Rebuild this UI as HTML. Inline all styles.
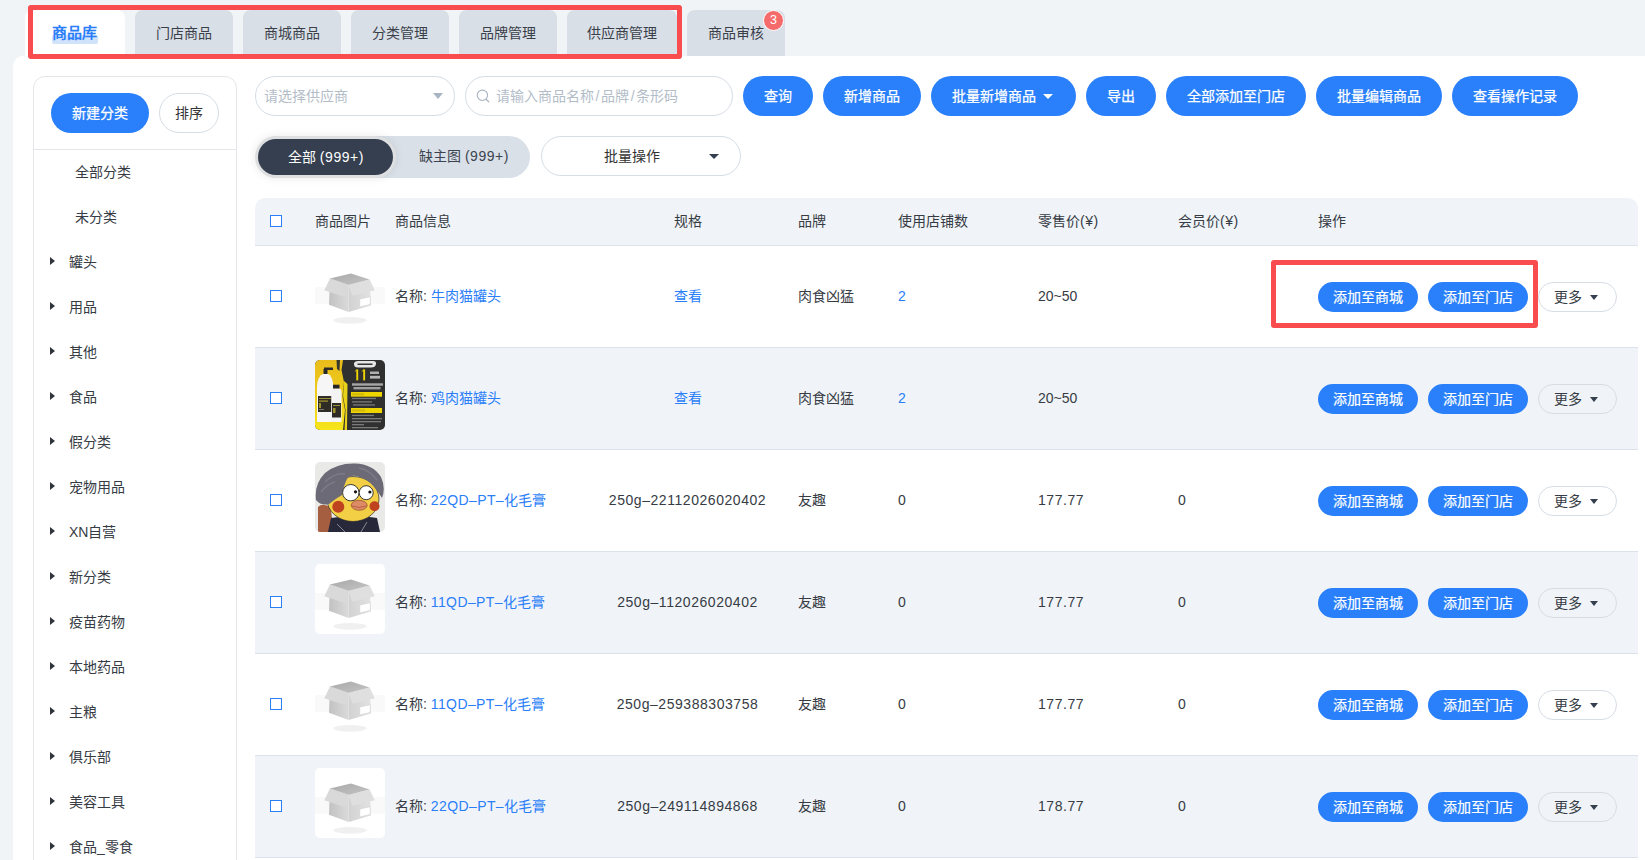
<!DOCTYPE html>
<html lang="zh-CN">
<head>
<meta charset="utf-8">
<style>
*{box-sizing:border-box;margin:0;padding:0}
html,body{width:1645px;height:860px;overflow:hidden}
body{background:#f0f4f7;font-family:"Liberation Sans",sans-serif;font-size:14px;color:#363b44;position:relative}
.abs{position:absolute}
.n{letter-spacing:0.55px}
.tab{position:absolute;top:10px;height:46px;background:#d9dfe6;border-radius:8px 8px 0 0;color:#39404a;line-height:46px;text-align:center;font-size:14px}
.redbox{position:absolute;border:5px solid #f84c4e;border-radius:3px}
.panel{position:absolute;left:13px;top:56px;width:1700px;height:900px;background:#fff;border-radius:10px 0 0 0}
.side{position:absolute;left:33px;top:76px;width:204px;height:900px;border:1px solid #e4e6e9;border-radius:12px}
.btn{position:absolute;height:40px;line-height:40px;border-radius:20px;background:#2a80fa;color:#fff;text-align:center;font-size:14px;-webkit-text-stroke:0.25px #fff}
.obtn{position:absolute;height:40px;line-height:38px;border-radius:20px;background:#fff;border:1px solid #d6dde5;color:#333;text-align:center}
.item{position:absolute;left:69px;font-size:14px;color:#363b44;line-height:20px}
.tri{position:absolute;left:50px;width:0;height:0;border-top:4px solid transparent;border-bottom:4px solid transparent;border-left:5.5px solid #30343b}
.sel{position:absolute;height:40px;border:1px solid #d5dde5;border-radius:20px;background:#fff}
.dtri{position:absolute;width:0;height:0;border-left:5px solid transparent;border-right:5px solid transparent;border-top:6px solid #a9b5c2}
.th{position:absolute;top:211px;line-height:20px;color:#363b44}
.row{position:absolute;left:255px;width:1383px;height:102px;border-bottom:1px solid #dce2e9}
.cb{position:absolute;left:270px;width:12px;height:12px;border:1.4px solid #2a7ef8;background:#fff}
.cell{position:absolute;line-height:20px;color:#363b44}
.link{color:#2a7ef8}
.sbtn{position:absolute;height:30px;line-height:30px;border-radius:15px;background:#2a80fa;color:#fff;text-align:center;width:100px;-webkit-text-stroke:0.2px #fff}
.more{position:absolute;left:1538px;width:79px;height:30px;line-height:28px;border-radius:15px;border:1px solid #d6dde5;color:#363b44;padding-left:15.3px}
.more i{position:absolute;left:50.5px;top:12px;width:0;height:0;border-left:4.5px solid transparent;border-right:4.5px solid transparent;border-top:5px solid #343f4f}
.img{position:absolute;left:315px;width:70px;height:70px;border-radius:5px;overflow:hidden}
.sl{display:inline-block;margin:0 1.6px}
</style>
</head>
<body>
<div class="tab" style="left:25px;width:100px;background:#fff"></div>
<div class="abs" style="left:52px;top:35px;width:46px;height:9px;background:#d1e3fb;border-radius:2px"></div>
<div class="abs" style="left:52px;top:23px;line-height:20px;font-size:15px;font-weight:bold;color:#2a7ef8">商品库</div>
<div class="tab" style="left:135px;width:98px">门店商品</div>
<div class="tab" style="left:243px;width:98px">商城商品</div>
<div class="tab" style="left:351px;width:98px">分类管理</div>
<div class="tab" style="left:459px;width:98px">品牌管理</div>
<div class="tab" style="left:567px;width:110px">供应商管理</div>
<div class="tab" style="left:687px;width:98px">商品审核</div>
<div class="abs" style="left:763px;top:10px;width:21px;height:21px;border-radius:50%;background:#f56b6b;border:1.2px solid #fff;color:#fff;font-size:12.5px;line-height:18.6px;text-align:center">3</div>
<div class="panel"></div>
<div class="redbox" style="left:27.5px;top:4.6px;width:654.5px;height:54.9px"></div>
<div class="side"></div>
<div class="btn" style="left:51px;top:93px;width:98px">新建分类</div>
<div class="obtn" style="left:159px;top:93px;width:60px">排序</div>
<div class="abs" style="left:34px;top:149px;width:202px;height:1px;background:#e4e6e9"></div>
<div class="item" style="left:75px;top:162px">全部分类</div>
<div class="item" style="left:75px;top:207px">未分类</div>
<div class="tri" style="top:257px"></div><div class="item" style="top:252px">罐头</div>
<div class="tri" style="top:302px"></div><div class="item" style="top:297px">用品</div>
<div class="tri" style="top:347px"></div><div class="item" style="top:342px">其他</div>
<div class="tri" style="top:392px"></div><div class="item" style="top:387px">食品</div>
<div class="tri" style="top:437px"></div><div class="item" style="top:432px">假分类</div>
<div class="tri" style="top:482px"></div><div class="item" style="top:477px">宠物用品</div>
<div class="tri" style="top:527px"></div><div class="item" style="top:522px">XN自营</div>
<div class="tri" style="top:572px"></div><div class="item" style="top:567px">新分类</div>
<div class="tri" style="top:617px"></div><div class="item" style="top:612px">疫苗药物</div>
<div class="tri" style="top:662px"></div><div class="item" style="top:657px">本地药品</div>
<div class="tri" style="top:707px"></div><div class="item" style="top:702px">主粮</div>
<div class="tri" style="top:752px"></div><div class="item" style="top:747px">俱乐部</div>
<div class="tri" style="top:797px"></div><div class="item" style="top:792px">美容工具</div>
<div class="tri" style="top:842px"></div><div class="item" style="top:837px">食品_零食</div>
<div class="sel" style="left:255px;top:76px;width:200px"><span class="abs" style="left:8px;top:9px;line-height:20px;color:#b3bdc8">请选择供应商</span><i class="dtri" style="left:177px;top:16px"></i></div>
<div class="sel" style="left:465px;top:76px;width:268px"><svg class="abs" style="left:9px;top:11px" width="16" height="16" viewBox="0 0 16 16"><circle cx="7.4" cy="7.3" r="5.2" fill="none" stroke="#a9b4c0" stroke-width="1.1"/><line x1="11.1" y1="11.3" x2="13.7" y2="13.8" stroke="#a9b4c0" stroke-width="1.2" stroke-linecap="round"/></svg><span class="abs" style="left:30px;top:9px;line-height:20px;color:#b3bdc8;white-space:nowrap">请输入商品名称<span class="sl">/</span>品牌<span class="sl">/</span>条形码</span></div>
<div class="btn" style="left:743px;top:76px;width:70px">查询</div>
<div class="btn" style="left:823px;top:76px;width:98px">新增商品</div>
<div class="btn" style="left:931px;top:76px;width:145px;text-align:left;padding-left:21px">批量新增商品<i class="abs" style="left:112px;top:18px;width:0;height:0;border-left:5px solid transparent;border-right:5px solid transparent;border-top:5.5px solid #fff"></i></div>
<div class="btn" style="left:1086px;top:76px;width:70px">导出</div>
<div class="btn" style="left:1166px;top:76px;width:140px">全部添加至门店</div>
<div class="btn" style="left:1316px;top:76px;width:126px">批量编辑商品</div>
<div class="btn" style="left:1452px;top:76px;width:126px">查看操作记录</div>
<div class="abs" style="left:256px;top:136px;width:274px;height:42px;border-radius:21px;background:#d9e0e7"></div>
<div class="abs" style="left:255px;top:136px;width:141px;height:42px;border-radius:21px;background:#dedfe1;box-shadow:0 0 10px rgba(0,0,0,.09)"></div>
<div class="abs" style="left:258px;top:139px;width:135px;height:36px;border-radius:18px;background:#353f4f;color:#fff;line-height:36px;text-align:center;padding-left:1px">全部 <span class="n">(999+)</span></div>
<div class="abs" style="left:419px;top:146px;line-height:20px;color:#3b4350;white-space:nowrap">缺主图 <span class="n">(999+)</span></div>
<div class="sel" style="left:541px;top:136px;width:200px"><span class="abs" style="left:62px;top:9px;line-height:20px;color:#333">批量操作</span><i class="dtri" style="left:167px;top:17px;border-top:5px solid #343f4f"></i></div>
<svg width="0" height="0" style="position:absolute">
<defs>
<linearGradient id="gi" x1="0" y1="0" x2="1" y2="1"><stop offset="0" stop-color="#a9a9a9"/><stop offset="1" stop-color="#c4c4c4"/></linearGradient>
<linearGradient id="gl" x1="0" y1="0" x2="1" y2="0"><stop offset="0" stop-color="#c2c2c2"/><stop offset="1" stop-color="#dadada"/></linearGradient>
<linearGradient id="gr" x1="0" y1="0" x2="1" y2="0"><stop offset="0" stop-color="#d2d2d2"/><stop offset="1" stop-color="#e2e2e2"/></linearGradient>
<symbol id="box" viewBox="0 0 750 750">
<rect x="0" y="310" width="750" height="180" fill="#f9f9f9"/>
<ellipse cx="375" cy="668" rx="178" ry="36" fill="#f0f0f0"/>
<polygon points="160,220 360,290 360,578 150,500" fill="url(#gl)"/>
<polygon points="360,290 585,230 600,510 360,578" fill="url(#gr)"/>
<polygon points="480,440 592,414 592,498 480,524" fill="#fff" stroke="#cfcfcf" stroke-width="6"/>
<polygon points="160,220 385,167 585,230 360,290" fill="url(#gi)"/>
<polygon points="160,220 100,345 325,420 360,290" fill="#d9d9d9"/>
<polygon points="585,230 640,345 400,405 360,290" fill="#dfdfdf"/>
</symbol>
</defs>
</svg>
<div class="abs" style="left:255px;top:198px;width:1383px;height:48px;background:#f0f4f8;border-radius:10px 10px 0 0;border-bottom:1px solid #dde3ea"></div>
<div class="cb" style="top:215px"></div>
<div class="th" style="left:315px">商品图片</div>
<div class="th" style="left:395px">商品信息</div>
<div class="th" style="left:674px">规格</div>
<div class="th" style="left:798px">品牌</div>
<div class="th" style="left:898px">使用店铺数</div>
<div class="th" style="left:1038px">零售价<span class="n">(¥)</span></div>
<div class="th" style="left:1178px">会员价<span class="n">(¥)</span></div>
<div class="th" style="left:1318px">操作</div>
<div class="row" style="top:246px;background:#fff"></div>
<div class="cb" style="top:290px"></div>
<svg class="img" style="top:258px" viewBox="0 0 750 750"><use href="#box"/></svg>
<div class="cell" style="left:395px;top:286px">名称: <span class="link">牛肉猫罐头</span></div>
<div class="cell link" style="left:597px;width:181px;text-align:center;top:286px">查看</div>
<div class="cell" style="left:798px;top:286px">肉食凶猛</div>
<div class="cell link" style="left:898px;top:286px">2</div>
<div class="cell" style="left:1038px;top:286px">20~50</div>
<div class="sbtn" style="left:1318px;top:282px">添加至商城</div>
<div class="sbtn" style="left:1428px;top:282px">添加至门店</div>
<div class="more" style="top:282px">更多<i></i></div>
<div class="row" style="top:348px;background:#f0f4f8"></div>
<div class="cb" style="top:392px"></div>
<div class="img" style="top:360px"><svg width="70" height="70" viewBox="0 0 70 70">
<defs><linearGradient id="ys" x1="0" y1="0" x2="0" y2="1"><stop offset="0" stop-color="#e9bd1c"/><stop offset=".6" stop-color="#efcf1a"/><stop offset="1" stop-color="#f7e61a"/></linearGradient></defs>
<rect width="70" height="70" fill="#303030"/>
<path d="M0 0 H28 L26.5 10 L29 22 L27.5 36 L30 50 L28 70 H0Z" fill="url(#ys)"/>
<path d="M29 21 L32.5 24 L32 70 L29.5 70 L30.5 50 L28 36Z" fill="#e8d21a"/>
<path d="M21.5 0 L25 0 L24.5 11 L22 9Z" fill="#3a3a30"/>
<path d="M2 62 L2 27 Q2 16 9 13.5 L12.5 13.5 Q18 16 18.4 27 L18.4 61 Q18.4 62 17 62 L3 62Z" fill="#f6f6f6"/>
<rect x="8.5" y="9" width="4" height="5" fill="#2a2a2a"/><rect x="9" y="7.5" width="9" height="2.5" fill="#2a2a2a"/>
<rect x="3" y="36" width="14" height="16" fill="#2e2c24"/>
<rect x="4" y="38" width="12" height="1" fill="#b8a640" opacity=".8"/><rect x="4" y="40.5" width="9" height="1.2" fill="#c8b530" opacity=".8"/><rect x="4" y="43" width="2" height="5" fill="#d0c030" opacity=".7"/><rect x="4" y="49" width="5" height="1" fill="#aaa" opacity=".6"/>
<path d="M16.2 62 L16.2 33 Q16.2 29 19 28.2 L24 28.2 Q26.6 29 26.6 33 L26.6 61 Q26.6 62 25.6 62 L17 62Z" fill="#f3f3f3"/>
<rect x="18" y="24.7" width="6.5" height="3.8" fill="#262626"/>
<rect x="17" y="43" width="9" height="14.5" fill="#2e2c24"/>
<rect x="18" y="45" width="7" height="1" fill="#b8a640" opacity=".8"/><rect x="18" y="48" width="2.5" height="5" fill="#d0c030" opacity=".7"/>
<path d="M39 3 Q40 0.8 44 1 L58 1 Q61.5 1 61 4 Q60.5 7.5 56 7.5 L43 7.5 Q38.5 7.5 39 3Z" fill="#e6e6e6"/>
<path d="M42.5 4.2 H57.5" stroke="#333" stroke-width="1.4"/>
<rect x="41.3" y="9.6" width="1.9" height="10.8" fill="#f0d200"/><path d="M39.5 12 L41.3 9.6 L43 9.8 Z" fill="#f0d200"/>
<rect x="48.2" y="9.6" width="1.9" height="10.8" fill="#f0d200"/><path d="M46.4 12 L48.2 9.6 L50 9.8 Z" fill="#f0d200"/>
<rect x="55" y="11.5" width="9" height="2.5" fill="#c8c8c8" opacity=".85"/><rect x="55" y="15.8" width="10" height="2.8" fill="#d0d0d0" opacity=".85"/>
<rect x="37" y="23.3" width="31" height="2.4" fill="#c4c4c4" opacity=".8"/><rect x="38.5" y="27" width="27" height="2.4" fill="#bdbdbd" opacity=".8"/>
<rect x="36" y="32" width="31" height="4.7" fill="#eed500"/><rect x="37" y="33.3" width="12" height="2" fill="#b39a20" opacity=".5"/>
<rect x="37" y="37.8" width="24" height="1.3" fill="#7a7a7a"/><rect x="37" y="41.2" width="20" height="1.3" fill="#7a7a7a"/><rect x="38" y="44.3" width="22" height="1.3" fill="#7a7a7a"/>
<rect x="36" y="48" width="31" height="5" fill="#eed500"/><rect x="37" y="49.5" width="13" height="2" fill="#b39a20" opacity=".5"/>
<rect x="37" y="54.8" width="22" height="1.3" fill="#7a7a7a"/><rect x="37" y="58" width="30" height="1.3" fill="#7a7a7a"/><rect x="37" y="61" width="29" height="1.3" fill="#7a7a7a"/><rect x="37" y="64" width="12" height="1.3" fill="#7a7a7a"/><rect x="37" y="67" width="26" height="1.3" fill="#7a7a7a"/>
</svg></div>
<div class="cell" style="left:395px;top:388px">名称: <span class="link">鸡肉猫罐头</span></div>
<div class="cell link" style="left:597px;width:181px;text-align:center;top:388px">查看</div>
<div class="cell" style="left:798px;top:388px">肉食凶猛</div>
<div class="cell link" style="left:898px;top:388px">2</div>
<div class="cell" style="left:1038px;top:388px">20~50</div>
<div class="sbtn" style="left:1318px;top:384px">添加至商城</div>
<div class="sbtn" style="left:1428px;top:384px">添加至门店</div>
<div class="more" style="top:384px">更多<i></i></div>
<div class="row" style="top:450px;background:#fff"></div>
<div class="cb" style="top:494px"></div>
<div class="img" style="top:462px"><svg width="70" height="70" viewBox="0 0 70 70">
<rect width="70" height="70" fill="#e9e9e7"/>
<path d="M3 45 Q8 40 16 46 L18 70 H3Z" fill="#a55e3f"/>
<path d="M13 70 L16 56 Q40 52 62 56 L65 70Z" fill="#27283a"/>
<path d="M22 62 L30 70 M52 60 L46 70" stroke="#ccc" stroke-width=".6"/>
<ellipse cx="38" cy="37" rx="26" ry="22.5" fill="#f2cf45" stroke="#2a2a2a" stroke-width=".7"/>
<path d="M1 38 Q-1 22 10 11 Q22 1 40 1.5 Q58 2 66 15 Q71 26 67 36 Q63 30 60 26 Q55 20 50 17 Q45 15 41 14 Q35 13 32 17 Q29 23 27 33 Q20 37 14 42 Q6 44 1 38Z" fill="#6d6a77"/><path d="M10 20 Q20 10 30 12 M44 6 Q55 8 62 18 M6 30 Q12 22 20 20" stroke="#858290" stroke-width="1.5" fill="none" opacity=".7"/>
<circle cx="35.8" cy="30.7" r="8.2" fill="#fff" stroke="#222" stroke-width=".9"/>
<circle cx="51.2" cy="30.7" r="7" fill="#fff" stroke="#222" stroke-width=".9"/>
<circle cx="40.5" cy="29.8" r="1.6" fill="#111"/><circle cx="54.9" cy="30" r="1.6" fill="#111"/>
<circle cx="23.3" cy="44.7" r="6" fill="#c0431f"/><circle cx="59.5" cy="44.2" r="5" fill="#c0431f"/>
<ellipse cx="44.2" cy="43.3" rx="8" ry="5" fill="#dd8a66" stroke="#8a3a20" stroke-width=".6"/>
<path d="M37 44 Q44 47 51 44" stroke="#8a3a20" stroke-width=".5" fill="none"/>
</svg></div>
<div class="cell" style="left:395px;top:490px">名称: <span class="link"><span class="n" style="letter-spacing:0.4px">22QD–PT–</span>化毛膏</span></div>
<div class="cell n" style="left:597px;width:181px;text-align:center;top:490px">250g–22112026020402</div>
<div class="cell" style="left:798px;top:490px">友趣</div>
<div class="cell" style="left:898px;top:490px">0</div>
<div class="cell n" style="left:1038px;top:490px">177.77</div>
<div class="cell" style="left:1178px;top:490px">0</div>
<div class="sbtn" style="left:1318px;top:486px">添加至商城</div>
<div class="sbtn" style="left:1428px;top:486px">添加至门店</div>
<div class="more" style="top:486px">更多<i></i></div>
<div class="row" style="top:552px;background:#f0f4f8"></div>
<div class="cb" style="top:596px"></div>
<div class="img" style="top:564px;background:#fff"><svg width="70" height="70" viewBox="0 0 750 750"><use href="#box"/></svg></div>
<div class="cell" style="left:395px;top:592px">名称: <span class="link"><span class="n" style="letter-spacing:0.4px">11QD–PT–</span>化毛膏</span></div>
<div class="cell n" style="left:597px;width:181px;text-align:center;top:592px">250g–112026020402</div>
<div class="cell" style="left:798px;top:592px">友趣</div>
<div class="cell" style="left:898px;top:592px">0</div>
<div class="cell n" style="left:1038px;top:592px">177.77</div>
<div class="cell" style="left:1178px;top:592px">0</div>
<div class="sbtn" style="left:1318px;top:588px">添加至商城</div>
<div class="sbtn" style="left:1428px;top:588px">添加至门店</div>
<div class="more" style="top:588px">更多<i></i></div>
<div class="row" style="top:654px;background:#fff"></div>
<div class="cb" style="top:698px"></div>
<svg class="img" style="top:666px" viewBox="0 0 750 750"><use href="#box"/></svg>
<div class="cell" style="left:395px;top:694px">名称: <span class="link"><span class="n" style="letter-spacing:0.4px">11QD–PT–</span>化毛膏</span></div>
<div class="cell n" style="left:597px;width:181px;text-align:center;top:694px">250g–259388303758</div>
<div class="cell" style="left:798px;top:694px">友趣</div>
<div class="cell" style="left:898px;top:694px">0</div>
<div class="cell n" style="left:1038px;top:694px">177.77</div>
<div class="cell" style="left:1178px;top:694px">0</div>
<div class="sbtn" style="left:1318px;top:690px">添加至商城</div>
<div class="sbtn" style="left:1428px;top:690px">添加至门店</div>
<div class="more" style="top:690px">更多<i></i></div>
<div class="row" style="top:756px;background:#f0f4f8"></div>
<div class="cb" style="top:800px"></div>
<div class="img" style="top:768px;background:#fff"><svg width="70" height="70" viewBox="0 0 750 750"><use href="#box"/></svg></div>
<div class="cell" style="left:395px;top:796px">名称: <span class="link"><span class="n" style="letter-spacing:0.4px">22QD–PT–</span>化毛膏</span></div>
<div class="cell n" style="left:597px;width:181px;text-align:center;top:796px">250g–249114894868</div>
<div class="cell" style="left:798px;top:796px">友趣</div>
<div class="cell" style="left:898px;top:796px">0</div>
<div class="cell n" style="left:1038px;top:796px">178.77</div>
<div class="cell" style="left:1178px;top:796px">0</div>
<div class="sbtn" style="left:1318px;top:792px">添加至商城</div>
<div class="sbtn" style="left:1428px;top:792px">添加至门店</div>
<div class="more" style="top:792px">更多<i></i></div>
<div class="redbox" style="left:1271px;top:260px;width:267px;height:68px"></div>
</body>
</html>
